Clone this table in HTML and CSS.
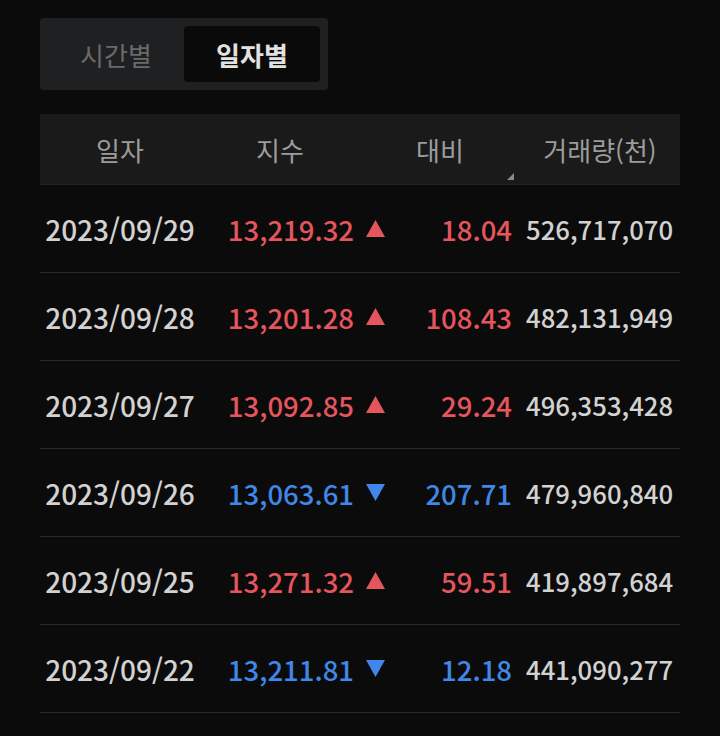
FILE: index.html
```html
<!DOCTYPE html>
<html lang="ko">
<head>
    <meta charset="UTF-8">
    <meta name="viewport" content="width=device-width, initial-scale=1.0">
    <title>일자별 지수</title>
    <link rel="stylesheet" href="styles.css">
</head>
<body>
    <div class="tabs">
        <button class="tab">시간별</button>
        <button class="tab active">일자별</button>
    </div>

    <div class="table">
        <div class="head">
            <div class="th">일자</div>
            <div class="th">지수</div>
            <div class="th sortable">대비</div>
            <div class="th">거래량(천)</div>
        </div>

        <div class="row">
            <div class="date">2023/09/29</div>
            <div class="index up">13,219.32 <svg class="arrow" viewBox="0 0 18 16"><path d="M9 0L18 16H0Z"/></svg></div>
            <div class="change up">18.04</div>
            <div class="volume">526,717,070</div>
        </div>
        <div class="row">
            <div class="date">2023/09/28</div>
            <div class="index up">13,201.28 <svg class="arrow" viewBox="0 0 18 16"><path d="M9 0L18 16H0Z"/></svg></div>
            <div class="change up">108.43</div>
            <div class="volume">482,131,949</div>
        </div>
        <div class="row">
            <div class="date">2023/09/27</div>
            <div class="index up">13,092.85 <svg class="arrow" viewBox="0 0 18 16"><path d="M9 0L18 16H0Z"/></svg></div>
            <div class="change up">29.24</div>
            <div class="volume">496,353,428</div>
        </div>
        <div class="row">
            <div class="date">2023/09/26</div>
            <div class="index down">13,063.61 <svg class="arrow" viewBox="0 0 18 16"><path d="M0 0H18L9 16Z"/></svg></div>
            <div class="change down">207.71</div>
            <div class="volume">479,960,840</div>
        </div>
        <div class="row">
            <div class="date">2023/09/25</div>
            <div class="index up">13,271.32 <svg class="arrow" viewBox="0 0 18 16"><path d="M9 0L18 16H0Z"/></svg></div>
            <div class="change up">59.51</div>
            <div class="volume">419,897,684</div>
        </div>
        <div class="row">
            <div class="date">2023/09/22</div>
            <div class="index down">13,211.81 <svg class="arrow" viewBox="0 0 18 16"><path d="M0 0H18L9 16Z"/></svg></div>
            <div class="change down">12.18</div>
            <div class="volume">441,090,277</div>
        </div>
    </div>
</body>
</html>
```

FILE: styles.css
```css
body {
    margin: 0;
    padding: 18px 40px;
    background: #0b0b0b;
    font-family: "Noto Sans CJK KR", "Noto Sans", sans-serif;
    min-height: 100vh;
    box-sizing: border-box;
}

.tabs {
    display: inline-flex;
    padding: 8px;
    background: #1f2021;
    border-radius: 4px;
}

.tab {
    width: 136px;
    height: 56px;
    border: none;
    border-radius: 4px;
    background: transparent;
    color: #6a6a6a;
    font-family: inherit;
    font-size: 26px;
    padding: 0;
}

.tab.active {
    background: #0a0a0a;
    color: #e2e2e2;
    font-weight: bold;
}

.table {
    margin-top: 24px;
    width: 640px;
}

.head {
    display: grid;
    grid-template-columns: 160px 160px 160px 160px;
    height: 70px;
    background: #1a1a1a;
    border-bottom: 1px solid #242424;
}

.th {
    display: flex;
    align-items: center;
    justify-content: center;
    color: #9c9c9c;
    font-size: 26px;
    position: relative;
}

.sortable::after {
    content: "";
    position: absolute;
    right: 6px;
    bottom: 4px;
    border-style: solid;
    border-width: 0 0 7px 7px;
    border-color: transparent transparent #8a8a8a transparent;
}

.row {
    display: grid;
    grid-template-columns: 160px 192px 120px 168px;
    height: 87px;
    align-items: center;
    border-bottom: 1px solid #2a2a2a;
    font-size: 27.5px;
    font-weight: 500;
}

.date {
    text-align: center;
    color: #d2d2d2;
    font-size: 28px;
}

.index {
    display: flex;
    align-items: center;
    justify-content: flex-end;
    gap: 12px;
    padding-right: 7px;
}

.arrow {
    width: 19px;
    height: 17px;
    fill: currentColor;
}

.change {
    text-align: right;
}

.volume {
    padding-left: 14px;
    color: #d2d2d2;
    font-size: 25.7px;
}

.up {
    color: #e4555d;
}

.down {
    color: #3f87e8;
}
```
